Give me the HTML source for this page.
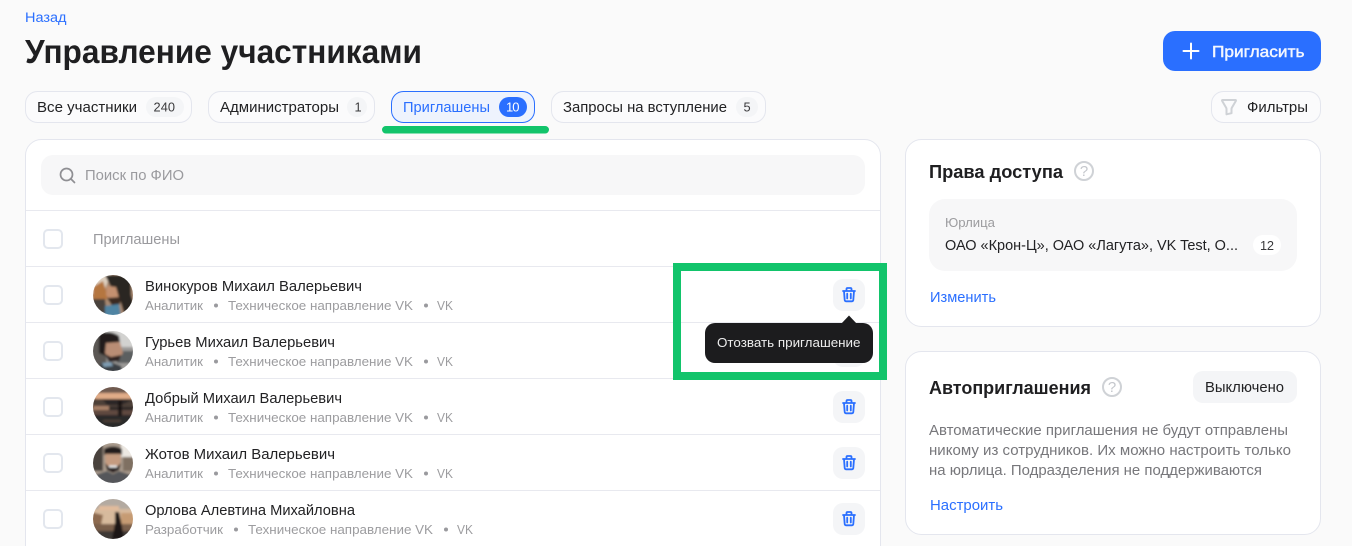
<!DOCTYPE html>
<html lang="ru"><head><meta charset="utf-8"><title>Управление участниками</title>
<style>
html,body{margin:0;padding:0;background:#fafafa;width:1352px;height:546px;overflow:hidden}
svg{display:block}
text{font-family:"Liberation Sans",sans-serif;fill:#222224;font-size:14.3px}
.b{fill:#2a6fff}.g{fill:#9a9a9e;font-size:14.700px}.s{font-size:13px;fill:#9c9c9f}.m{fill:#77777b}
.h{font-weight:700;font-size:18.5px;fill:#1f1f21}
.c{font-size:12.8px;fill:#3a3a3c}
.box{fill:none;stroke:#e3e7ee;stroke-width:2}
.tb{fill:#f4f5f7}
.tr{fill:none;stroke:#2a6fff;stroke-width:1.8;stroke-linecap:round;stroke-linejoin:round}
.q{font-size:15px;fill:#c4c7cc}
</style></head><body>
<svg width="1352" height="546" viewBox="0 0 1352 546" xmlns="http://www.w3.org/2000/svg">
<defs>
<g id="trash"><path class="tr" d="M-6 -3.500H6M-2.500 -3.500V-5.500Q-2.500 -6.500 -1.500 -6.500H1.500Q2.500 -6.500 2.500 -5.500V-3.500M-5 -3.500L-4.300 5.500Q-4.100 6.800 -3 6.800H3Q4.100 6.800 4.300 5.500L5 -3.500M-1.800 -0.800V4M1.800 -0.800V4"/></g>
<clipPath id="ca"><circle cx="0" cy="0" r="20"/></clipPath>
<filter id="bl" x="-10%" y="-10%" width="120%" height="120%"><feGaussianBlur stdDeviation="1.100"/></filter>
</defs>
<rect width="1352" height="546" fill="#fafafa"/>

<text x="25" y="22" textLength="41.500" lengthAdjust="spacingAndGlyphs" class="b" style="font-size:13.500px">Назад</text>
<text x="25" y="63" textLength="397" lengthAdjust="spacingAndGlyphs" style="font-size:33px;font-weight:700;fill:#1f1f21">Управление участниками</text>

<rect x="1163" y="31" width="158" height="40" rx="12" fill="#2a6fff"/>
<path d="M1183.500 51H1198.500M1191 43.500V58.500" stroke="#fff" stroke-width="2" stroke-linecap="round"/>
<text x="1212" y="57" textLength="92.500" lengthAdjust="spacingAndGlyphs" style="font-size:16px;fill:#f4f7ff;stroke:#f4f7ff;stroke-width:.45px">Пригласить</text>

<rect x="25.500" y="91.500" width="166" height="31" rx="12" fill="#fbfbfc" stroke="#e4e6ee"/>
<text x="37" y="112" textLength="100" lengthAdjust="spacingAndGlyphs">Все участники</text>
<rect x="146" y="97" width="38" height="20" rx="10" class="tb"/>
<text x="153.500" y="111.500" textLength="21.500" class="c">240</text>

<rect x="208.500" y="91.500" width="166" height="31" rx="12" fill="#fbfbfc" stroke="#e4e6ee"/>
<text x="220" y="112" textLength="119" lengthAdjust="spacingAndGlyphs">Администраторы</text>
<rect x="347" y="97" width="20" height="20" rx="10" class="tb"/>
<text x="354.500" y="111.500" class="c">1</text>

<rect x="391.500" y="91.500" width="143" height="31" rx="12" fill="#eef3fd" stroke="#2a6fff"/>
<text x="403" y="112" textLength="87" lengthAdjust="spacingAndGlyphs" class="b">Приглашены</text>
<rect x="499" y="97" width="28" height="20" rx="10" fill="#2a6fff"/>
<text x="506" y="111.500" textLength="13.500" style="font-size:13px;fill:#fff">10</text>
<rect x="382" y="126" width="167" height="7.500" rx="3.750" fill="#12c46b"/>

<rect x="551.500" y="91.500" width="214" height="31" rx="12" fill="#fbfbfc" stroke="#e4e6ee"/>
<text x="563" y="112" textLength="164" lengthAdjust="spacingAndGlyphs">Запросы на вступление</text>
<rect x="736" y="97" width="22" height="20" rx="10" class="tb"/>
<text x="743.500" y="111.500" class="c">5</text>

<rect x="1211.500" y="91.500" width="109" height="31" rx="12" fill="#fbfbfc" stroke="#e4e6ee"/>
<path d="M1222.500 100H1235.500Q1236.300 100 1235.800 101L1232 107.500Q1231.500 108.200 1231.500 109V113.200L1226.500 114.300V109Q1226.500 108.200 1226 107.500L1222.200 101Q1221.700 100 1222.500 100Z" fill="none" stroke="#cfd2d6" stroke-width="2" stroke-linejoin="round"/>
<text x="1247" y="112" textLength="61" lengthAdjust="spacingAndGlyphs">Фильтры</text>

<!-- main card -->
<rect x="25.500" y="139.500" width="855" height="430" rx="16" fill="#fff" stroke="#e4e6ee"/>
<rect x="41" y="155" width="824" height="40" rx="12" fill="#f7f7f8"/>
<circle cx="66.500" cy="174.500" r="6" fill="none" stroke="#8f8f93" stroke-width="1.700"/>
<path d="M71 179L74.500 182.500" stroke="#8f8f93" stroke-width="1.700" stroke-linecap="round"/>
<text x="85" y="180" textLength="99" lengthAdjust="spacingAndGlyphs" class="g">Поиск по ФИО</text>
<path d="M26 210.500H880M26 266.500H880M26 322.500H880M26 378.500H880M26 434.500H880M26 490.500H880" stroke="#e8e9ef"/>

<rect x="44" y="230" width="18" height="18" rx="4" class="box"/>
<text x="93" y="244" textLength="87" lengthAdjust="spacingAndGlyphs" class="g">Приглашены</text>

<!-- rows -->
<rect x="44" y="286" width="18" height="18" rx="4" class="box"/>
<rect x="44" y="342" width="18" height="18" rx="4" class="box"/>
<rect x="44" y="398" width="18" height="18" rx="4" class="box"/>
<rect x="44" y="454" width="18" height="18" rx="4" class="box"/>
<rect x="44" y="510" width="18" height="18" rx="4" class="box"/>

<!-- avatar 1 -->
<g transform="translate(113,295)"><g clip-path="url(#ca)"><g filter="url(#bl)">
<rect x="-22" y="-22" width="44" height="44" fill="#a98a72"/>
<path d="M-22 -22H-2L-8 -6L-22 0Z" fill="#ded0c0"/>
<path d="M-20 -8L-10 -14L-5 2L-10 8L-20 6Z" fill="#b5763f"/>
<path d="M-22 4L-8 4L-6 22H-22Z" fill="#4a423c"/>
<path d="M-8 -20H18V0L22 12V22H12L8 8L-1 -6L-3 -10Z" fill="#292522"/>
<path d="M-6 -9L3 -8L6 3L0 8L-7 0Z" fill="#c49070"/>
<path d="M-6 3L7 2L7 9L0 12Z" fill="#3a2c24"/>
<path d="M-8 11L6 9L8 22H-8Z" fill="#4f84a3"/>
</g></g></g>
<!-- avatar 2 -->
<g transform="translate(113,351)"><g clip-path="url(#ca)"><g filter="url(#bl)">
<rect x="-22" y="-22" width="44" height="44" fill="#9b9a98"/>
<path d="M-22 -22H22V-4H-22Z" fill="#d2d2d0"/>
<path d="M4 0H22V12H4Z" fill="#5c5f60"/>
<path d="M-22 -22H-8L-6 22H-22Z" fill="#5b5854"/>
<path d="M-14 -16Q-4 -22 6 -15L7 -9L-6 -7L-7 5L-14 2Z" fill="#211d1b"/>
<path d="M-7 -8L7 -9L10 2L5 9L-4 9L-8 2Z" fill="#b98d74"/>
<path d="M-8 3L-2 6L8 4L6 10L-4 11Z" fill="#2d2320"/>
<path d="M-16 22L-12 12L-2 11L8 15L10 22Z" fill="#3a3f44"/>
<path d="M-11 12L-2 11L0 15L-9 16Z" fill="#7f9db3"/>
</g></g></g>
<!-- avatar 3 -->
<g transform="translate(113,407)"><g clip-path="url(#ca)"><g filter="url(#bl)">
<rect x="-22" y="-22" width="44" height="44" fill="#2b2827"/>
<rect x="-22" y="-22" width="44" height="9" fill="#6f5a50"/>
<path d="M-22 -14H22V-8H-22Z" fill="#e0ac88"/>
<path d="M-22 -9L-10 -7L-6 -2H8L22 -8V0H-22Z" fill="#4e3f38"/>
<path d="M-20 -1H-4V3H-20Z" fill="#a88068"/>
<path d="M-22 3H22V8H-22Z" fill="#5e4a40"/>
<path d="M5 -7H9V10H5Z" fill="#1a1818"/>
<path d="M-22 9H22V22H-22Z" fill="#2b2929"/>
<path d="M-10 13H8V15H-10Z" fill="#4f4038"/>
</g></g></g>
<!-- avatar 4 -->
<g transform="translate(113,463)"><g clip-path="url(#ca)"><g filter="url(#bl)">
<rect x="-22" y="-22" width="44" height="44" fill="#a89a8c"/>
<path d="M-22 -22H-10V8H-22Z" fill="#4a423c"/>
<path d="M8 -22H22V-6H8Z" fill="#ece8e2"/>
<path d="M10 -6H22V8H10Z" fill="#7f6f62"/>
<path d="M-9 -14Q0 -19 9 -14L9 -8H-9Z" fill="#211d1b"/>
<path d="M-8 -9H8L7 5L0 9L-7 5Z" fill="#c59b80"/>
<path d="M-8 0L-5 3H5L8 0L6 7L0 10L-6 7Z" fill="#2c2320"/>
<path d="M-4 2.500H4V4.500H-4Z" fill="#eee"/>
<path d="M-22 22L-18 12L-6 8L0 11L6 8L18 12L22 22Z" fill="#55565a"/>
</g></g></g>
<!-- avatar 5 -->
<g transform="translate(113,519)"><g clip-path="url(#ca)"><g filter="url(#bl)">
<rect x="-22" y="-22" width="44" height="44" fill="#d7ba9d"/>
<path d="M-22 -22H22V-10H-22Z" fill="#b3aaa1"/>
<path d="M-14 -13H6V-9H-14Z" fill="#e2bb9c"/>
<path d="M-22 -7L-10 -4L-12 6H-22Z" fill="#8d6a50"/>
<path d="M8 -6H22V6H8Z" fill="#c69b73"/>
<path d="M-22 5H22V12H-22Z" fill="#7a5f4c"/>
<path d="M-22 12H22V22H-22Z" fill="#3c3835"/>
<path d="M2 -7H6L8 2L11 20H-1L2 4Z" fill="#1a1717"/>
</g></g></g>

<text x="145" y="291" textLength="217" lengthAdjust="spacingAndGlyphs">Винокуров Михаил Валерьевич</text>
<text x="145" y="347" textLength="190" lengthAdjust="spacingAndGlyphs">Гурьев Михаил Валерьевич</text>
<text x="145" y="403" textLength="197" lengthAdjust="spacingAndGlyphs">Добрый Михаил Валерьевич</text>
<text x="145" y="459" textLength="190" lengthAdjust="spacingAndGlyphs">Жотов Михаил Валерьевич</text>
<text x="145" y="515" textLength="210" lengthAdjust="spacingAndGlyphs">Орлова Алевтина Михайловна</text>

<g><text x="145" y="310" textLength="58" lengthAdjust="spacingAndGlyphs" class="s">Аналитик</text><circle cx="216" cy="305.500" r="2" fill="#9a9a9e"/><text x="228" y="310" textLength="185" lengthAdjust="spacingAndGlyphs" class="s">Техническое направление VK</text><circle cx="426" cy="305.500" r="2" fill="#9a9a9e"/><text x="437" y="310" textLength="16" lengthAdjust="spacingAndGlyphs" class="s">VK</text></g>
<g><text x="145" y="366" textLength="58" lengthAdjust="spacingAndGlyphs" class="s">Аналитик</text><circle cx="216" cy="361.500" r="2" fill="#9a9a9e"/><text x="228" y="366" textLength="185" lengthAdjust="spacingAndGlyphs" class="s">Техническое направление VK</text><circle cx="426" cy="361.500" r="2" fill="#9a9a9e"/><text x="437" y="366" textLength="16" lengthAdjust="spacingAndGlyphs" class="s">VK</text></g>
<g><text x="145" y="422" textLength="58" lengthAdjust="spacingAndGlyphs" class="s">Аналитик</text><circle cx="216" cy="417.500" r="2" fill="#9a9a9e"/><text x="228" y="422" textLength="185" lengthAdjust="spacingAndGlyphs" class="s">Техническое направление VK</text><circle cx="426" cy="417.500" r="2" fill="#9a9a9e"/><text x="437" y="422" textLength="16" lengthAdjust="spacingAndGlyphs" class="s">VK</text></g>
<g><text x="145" y="478" textLength="58" lengthAdjust="spacingAndGlyphs" class="s">Аналитик</text><circle cx="216" cy="473.500" r="2" fill="#9a9a9e"/><text x="228" y="478" textLength="185" lengthAdjust="spacingAndGlyphs" class="s">Техническое направление VK</text><circle cx="426" cy="473.500" r="2" fill="#9a9a9e"/><text x="437" y="478" textLength="16" lengthAdjust="spacingAndGlyphs" class="s">VK</text></g>
<g><text x="145" y="534" textLength="78" lengthAdjust="spacingAndGlyphs" class="s">Разработчик</text><circle cx="236" cy="529.500" r="2" fill="#9a9a9e"/><text x="248" y="534" textLength="185" lengthAdjust="spacingAndGlyphs" class="s">Техническое направление VK</text><circle cx="446" cy="529.500" r="2" fill="#9a9a9e"/><text x="457" y="534" textLength="16" lengthAdjust="spacingAndGlyphs" class="s">VK</text></g>

<rect x="833" y="279" width="32" height="32" rx="10" class="tb"/>
<use href="#trash" transform="translate(849,294.500)"/>
<rect x="833" y="335" width="32" height="32" rx="10" class="tb"/>
<rect x="833" y="391" width="32" height="32" rx="10" class="tb"/>
<use href="#trash" transform="translate(849,406.500)"/>
<rect x="833" y="447" width="32" height="32" rx="10" class="tb"/>
<use href="#trash" transform="translate(849,462.500)"/>
<rect x="833" y="503" width="32" height="32" rx="10" class="tb"/>
<use href="#trash" transform="translate(849,518.500)"/>

<!-- tooltip -->
<rect x="705" y="323" width="168" height="40" rx="10" fill="#1c1c1e"/>
<path d="M841 324L849 315.500L857 324Z" fill="#1c1c1e"/>
<text x="717" y="347" textLength="143.500" lengthAdjust="spacingAndGlyphs" style="font-size:13px;fill:#ececec">Отозвать приглашение</text>
<rect x="677" y="267" width="206" height="109" fill="none" stroke="#12c46b" stroke-width="8"/>

<!-- right cards -->
<rect x="905.500" y="139.500" width="415" height="187" rx="16" fill="#fff" stroke="#e4e6ee"/>
<text x="929" y="178" textLength="134" lengthAdjust="spacingAndGlyphs" class="h">Права доступа</text>
<g transform="translate(1084,171)"><circle r="9" fill="none" stroke="#cfd2d6" stroke-width="2"/><text x="-4.200" y="5.200" class="q">?</text></g>
<rect x="929" y="199" width="368" height="72" rx="16" fill="#f7f7f8"/>
<text x="945" y="227" textLength="50" lengthAdjust="spacingAndGlyphs" class="s">Юрлица</text>
<text x="945" y="250" textLength="293" lengthAdjust="spacingAndGlyphs">ОАО «Крон-Ц», ОАО «Лагута», VK Test, О...</text>
<rect x="1253" y="235" width="28" height="20" rx="10" fill="#fff"/>
<text x="1260" y="250" textLength="14" class="c">12</text>
<text x="930" y="302" textLength="66" lengthAdjust="spacingAndGlyphs" class="b">Изменить</text>

<rect x="905.500" y="351.500" width="415" height="183" rx="16" fill="#fff" stroke="#e4e6ee"/>
<text x="929" y="394" textLength="162" lengthAdjust="spacingAndGlyphs" class="h">Автоприглашения</text>
<g transform="translate(1112,387)"><circle r="9" fill="none" stroke="#cfd2d6" stroke-width="2"/><text x="-4.200" y="5.200" class="q">?</text></g>
<rect x="1193" y="371" width="104" height="32" rx="10" class="tb"/>
<text x="1205" y="392" textLength="79" lengthAdjust="spacingAndGlyphs">Выключено</text>
<text x="929" y="435" textLength="359" lengthAdjust="spacingAndGlyphs" class="m">Автоматические приглашения не будут отправлены</text>
<text x="929" y="455" textLength="362" lengthAdjust="spacingAndGlyphs" class="m">никому из сотрудников. Их можно настроить только</text>
<text x="929" y="475" textLength="333" lengthAdjust="spacingAndGlyphs" class="m">на юрлица. Подразделения не поддерживаются</text>
<text x="930" y="510" textLength="73" lengthAdjust="spacingAndGlyphs" class="b">Настроить</text>
</svg>
</body></html>
